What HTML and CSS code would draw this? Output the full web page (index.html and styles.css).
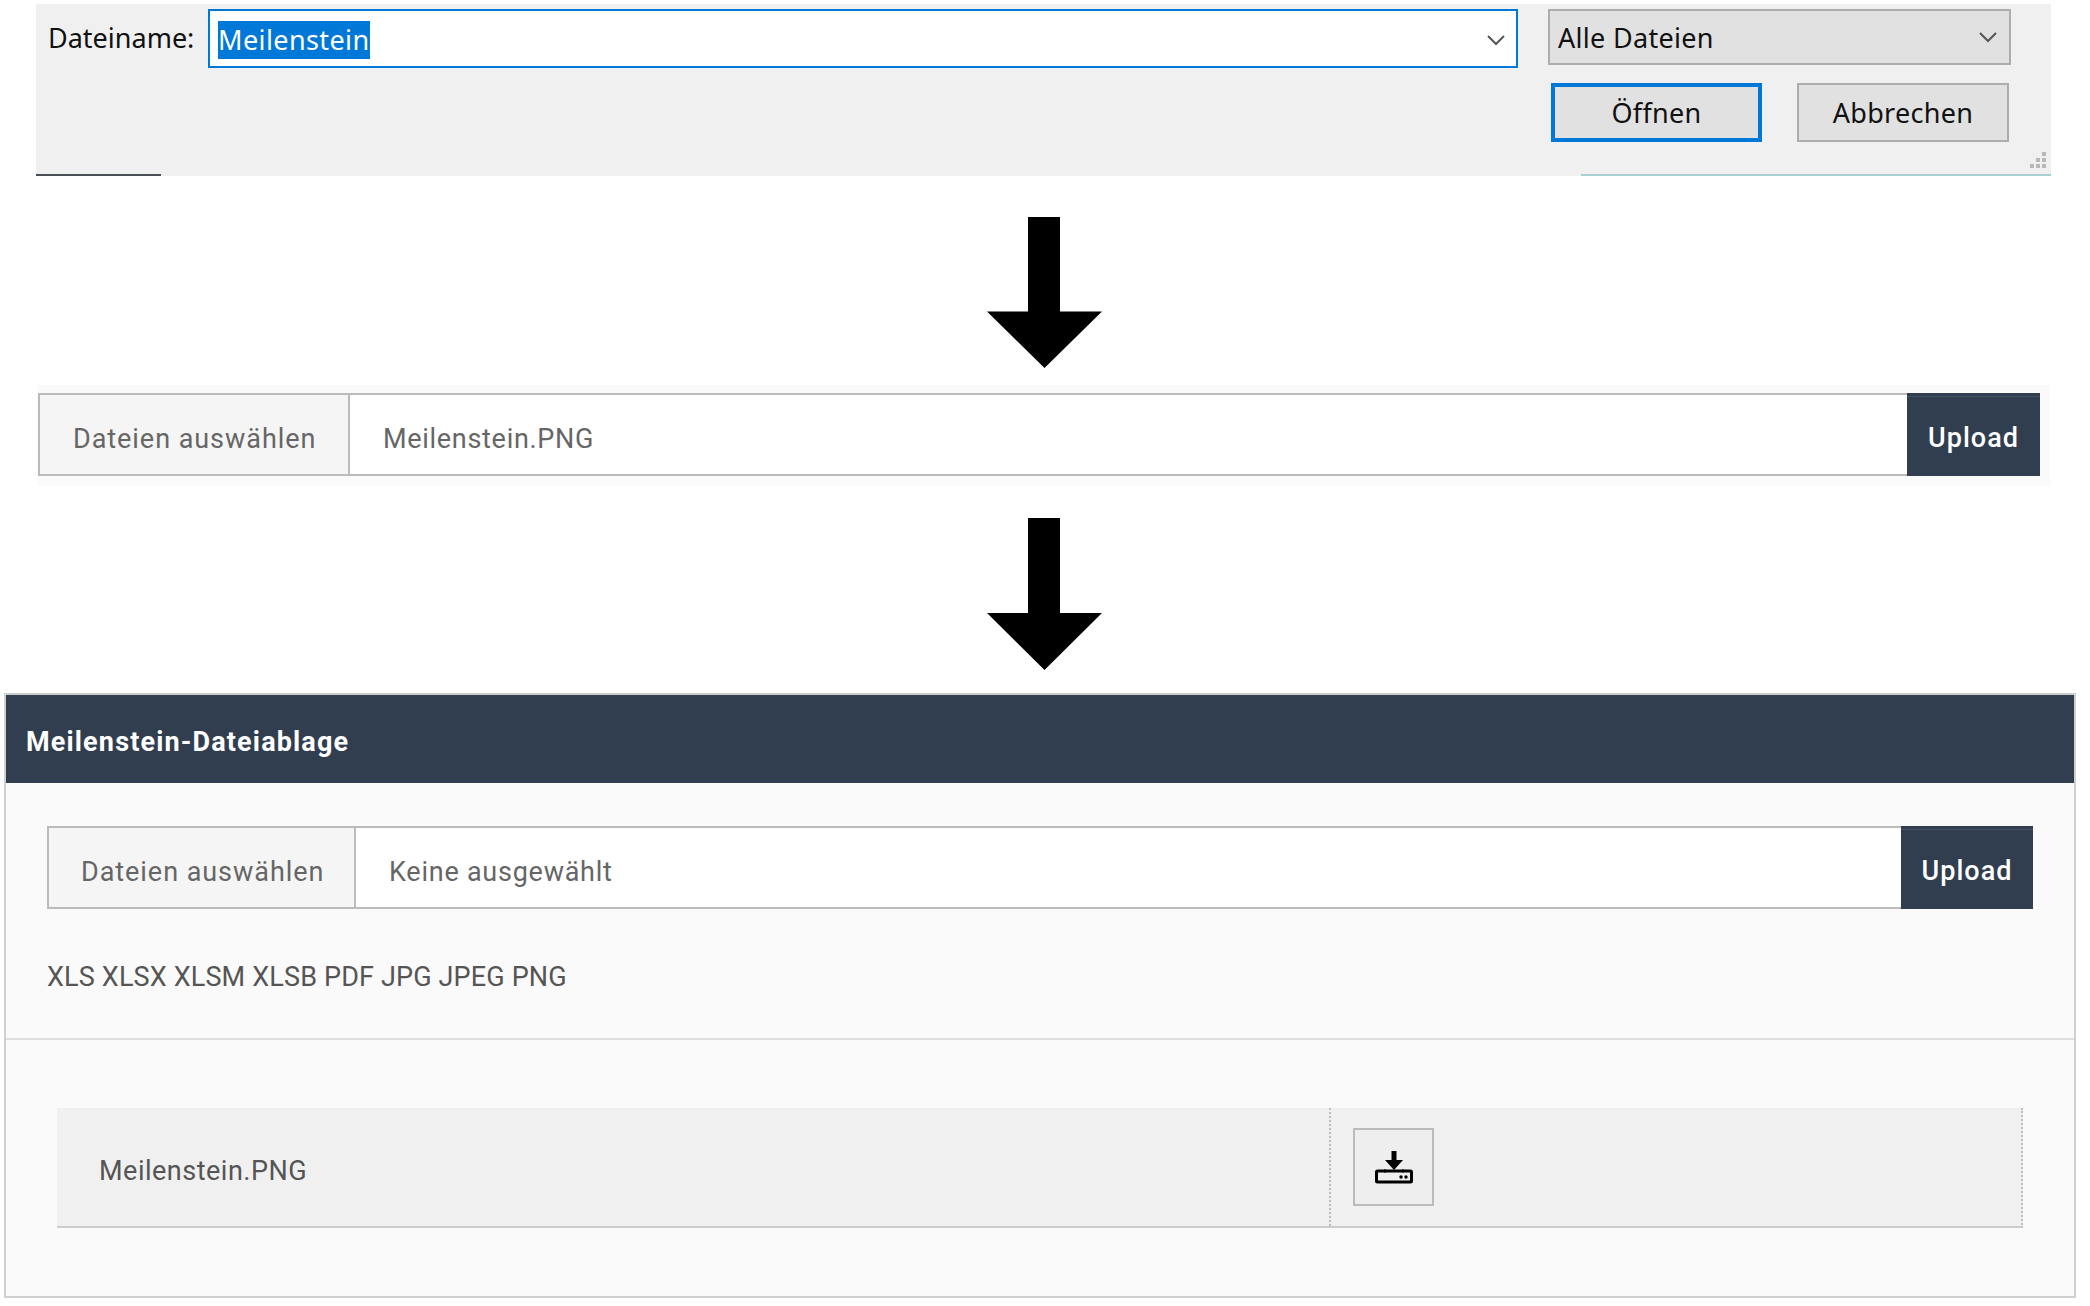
FILE: index.html
```html
<!DOCTYPE html>
<html lang="de">
<head>
    <meta charset="UTF-8">
    <title>Meilenstein-Dateiablage</title>
    <link rel="stylesheet" href="styles.css">
</head>
<body>
    <div class="dialog">
        <div class="dialog-left">
            <span class="dialog-label">Dateiname:</span>
            <div class="name-input">
                <span class="selected-text">Meilenstein</span>
                <svg class="chevron" width="20" height="12" viewBox="0 0 20 12"><path d="M2 2l8 8 8-8" fill="none" stroke="#555" stroke-width="2"/></svg>
            </div>
        </div>
        <div class="dialog-right">
            <div class="type-select">
                <span>Alle Dateien</span>
                <svg class="chevron" width="20" height="12" viewBox="0 0 20 12"><path d="M2 2l8 8 8-8" fill="none" stroke="#555" stroke-width="2"/></svg>
            </div>
            <div class="dialog-buttons">
                <button class="win-btn win-btn-primary">Öffnen</button>
                <button class="win-btn">Abbrechen</button>
            </div>
        </div>
        <span class="edge-dark"></span>
        <span class="edge-teal"></span>
        <svg class="grip" width="18" height="18" viewBox="0 0 18 18" fill="#b9b9b9">
            <rect x="13" y="1" width="4" height="4"/>
            <rect x="7" y="7" width="4" height="4"/><rect x="13" y="7" width="4" height="4"/>
            <rect x="1" y="13" width="4" height="4"/><rect x="7" y="13" width="4" height="4"/><rect x="13" y="13" width="4" height="4"/>
        </svg>
    </div>

    <svg class="big-arrow arrow-one" width="115" height="151" viewBox="0 0 115 152" preserveAspectRatio="none"><path d="M41 0h32v95h42L57.500 152 0 95h41z"/></svg>

    <div class="upload-strip">
        <div class="file-bar">
            <div class="file-choose">Dateien auswählen</div>
            <div class="file-name">Meilenstein.PNG</div>
            <button class="upload-btn">Upload</button>
        </div>
    </div>

    <svg class="big-arrow arrow-two" width="115" height="152" viewBox="0 0 115 152"><path d="M41 0h32v95h42L57.500 152 0 95h41z"/></svg>

    <div class="panel">
        <div class="panel-header">Meilenstein-Dateiablage</div>
        <div class="panel-upload">
            <div class="file-bar">
                <div class="file-choose">Dateien auswählen</div>
                <div class="file-name">Keine ausgewählt</div>
                <button class="upload-btn">Upload</button>
            </div>
            <div class="file-types">XLS XLSX XLSM XLSB PDF JPG JPEG PNG</div>
        </div>
        <div class="panel-files">
            <div class="file-row">
                <div class="file-row-name">Meilenstein.PNG</div>
                <div class="file-row-action">
                    <button class="download-btn">
                        <svg width="38" height="33" viewBox="0 0 38 33">
                            <path d="M16.500 0h5v9h6.500L19 19 10 9h6.500z"/>
                            <path d="M11 20H2.500a1 1 0 0 0-1 1v9a1 1 0 0 0 1 1h33a1 1 0 0 0 1-1v-9a1 1 0 0 0-1-1H27" fill="none" stroke="#000" stroke-width="3"/>
                            <path d="M9 20h20" fill="none" stroke="#000" stroke-width="3"/>
                            <circle cx="26" cy="26" r="1.700"/><circle cx="31" cy="26" r="1.700"/>
                        </svg>
                    </button>
                </div>
            </div>
        </div>
    </div>
</body>
</html>
```

FILE: styles.css
```css
* {
    margin: 0;
    padding: 0;
    box-sizing: border-box;
}
body {
    background: white;
    font-family: 'Roboto', sans-serif;
    width: 2090px;
    padding-top: 4px;
    overflow: hidden;
}

/* windows file dialog */
.dialog {
    position: relative;
    display: flex;
    height: 172px;
    margin: 0 39px 0 36px;
    padding: 5px 40px 0 12px;
    background: #f0f0f0;
    font-family: 'Noto Sans', sans-serif;
    font-size: 27px;
    letter-spacing: 0.3px;
    color: #111;
}
.dialog-left {
    display: flex;
    align-items: flex-start;
}
.dialog-label {
    width: 160px;
    line-height: 58px;
    letter-spacing: 0;
}
.name-input {
    display: flex;
    align-items: center;
    justify-content: space-between;
    width: 1310px;
    height: 59px;
    padding: 2px 10px 0 8px;
    background: white;
    border: 2px solid #0078d7;
}
.selected-text {
    background: #0078d7;
    color: white;
    line-height: 38px;
    letter-spacing: 0.4px;
}
.dialog-right {
    width: 463px;
    margin-left: 30px;
}
.type-select {
    display: flex;
    align-items: center;
    justify-content: space-between;
    height: 56px;
    padding: 0 11px 0 8px;
    background: #e1e1e1;
    border: 2px solid #adadad;
}
.dialog-buttons {
    display: flex;
    gap: 35px;
    margin-top: 18px;
    padding-left: 3px;
}
.win-btn {
    width: 212px;
    height: 59px;
    background: #e1e1e1;
    border: 2px solid #adadad;
    font-family: inherit;
    font-size: 27px;
    letter-spacing: 0.3px;
    color: #111;
}
.win-btn-primary {
    width: 211px;
    border: 4px solid #0078d7;
}
.edge-dark {
    position: absolute;
    left: 0;
    bottom: 0;
    width: 125px;
    height: 2px;
    background: #4a4f55;
}
.edge-teal {
    position: absolute;
    right: 0;
    bottom: 0;
    width: 470px;
    height: 2px;
    background: #a8d0d4;
}
.grip {
    position: absolute;
    right: 4px;
    bottom: 7px;
}

.big-arrow {
    display: block;
    margin-left: 987px;
}
.arrow-one {
    margin-top: 41px;
}
.arrow-two {
    margin-top: 32px;
}

/* file upload bar */
.upload-strip {
    margin: 17px 40px 0 37px;
    padding: 8px 10px 10px 1px;
    background: #fafafa;
}
.file-bar {
    display: flex;
    height: 83px;
    font-size: 27px;
    letter-spacing: 0.7px;
    line-height: 73px;
    color: #666;
}
.file-choose {
    width: 312px;
    padding: 8px 0 0 33px;
    background: #f5f5f5;
    border: 2px solid #bbb;
    letter-spacing: 0.95px;
    white-space: nowrap;
}
.file-name {
    flex: 1;
    padding: 8px 0 0 33px;
    background: white;
    border: 2px solid #bbb;
    border-left: none;
    border-right: none;
}
.upload-btn {
    width: 133px;
    padding-top: 7px;
    background: #303e50;
    border: none;
    box-shadow: inset 0 3px 0 #303e50, inset 0 4px 0 #465364;
    color: white;
    font-family: inherit;
    font-size: 27px;
    font-weight: 500;
    letter-spacing: 1px;
}

/* panel */
.panel {
    width: 2072px;
    height: 605px;
    margin: 23px 0 0 4px;
    background: #fafafa;
    border: 2px solid #d0d0d0;
    border-top: 2px solid #ccc;
}
.panel-header {
    height: 88px;
    padding-left: 20px;
    background: #303e50;
    color: white;
    font-size: 27px;
    font-weight: 700;
    letter-spacing: 1.15px;
    line-height: 94px;
}
.panel-upload {
    height: 257px;
    padding: 43px 41px 0 41px;
    border-bottom: 2px solid #ddd;
}
.panel-upload .file-choose {
    width: 309px;
    padding-left: 32px;
}
.panel-upload .file-name {
    letter-spacing: 0.75px;
}
.panel-upload .upload-btn {
    width: 132px;
}
.file-types {
    margin-top: 50px;
    font-size: 27px;
    letter-spacing: 0.15px;
    line-height: 36px;
    color: #555;
}
.panel-files {
    padding: 68px 51px 0 51px;
}
.file-row {
    display: flex;
    height: 120px;
    background: #f0f0f0;
    border-bottom: 2px solid #ccc;
    border-right: 2px dotted #bbb;
    color: #555;
    font-size: 27px;
    letter-spacing: 0.5px;
}
.file-row-name {
    width: 1274px;
    padding-left: 42px;
    line-height: 126px;
    border-right: 2px dotted #bbb;
}
.file-row-action {
    padding: 20px 0 0 22px;
}
.download-btn {
    display: flex;
    align-items: center;
    justify-content: center;
    width: 81px;
    height: 78px;
    background: #eee;
    border: 2px solid #bbb;
}
```
